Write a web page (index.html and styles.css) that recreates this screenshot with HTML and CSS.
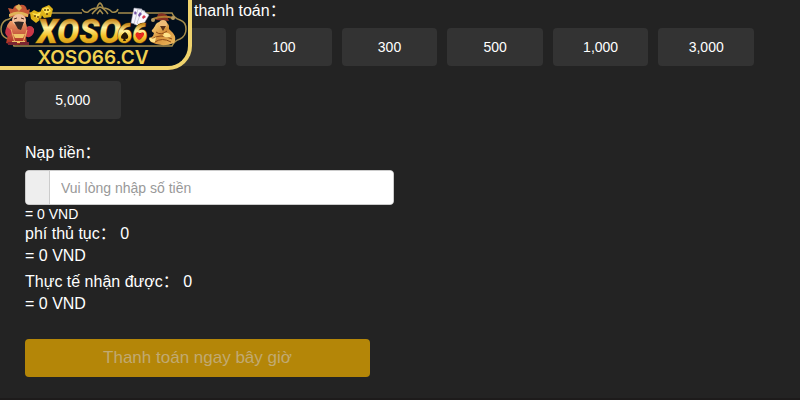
FILE: index.html
```html
<!DOCTYPE html>
<html lang="vi">
<head>
    <meta charset="UTF-8">
    <meta name="viewport" content="width=device-width, initial-scale=1.0">
    <title>Nạp tiền</title>
    <link rel="stylesheet" href="styles.css">
</head>
<body>
    <a class="logo" href="#" aria-label="XOSO66.CV">
        <svg class="logo-art" viewBox="0 0 188 66" aria-hidden="true">
            <defs>
                <linearGradient id="gold" x1="0" y1="0" x2="0" y2="1">
                    <stop offset="0.2" stop-color="#c98a1c"/>
                    <stop offset="0.4" stop-color="#fff3a0"/>
                    <stop offset="0.6" stop-color="#f5c32c"/>
                    <stop offset="0.9" stop-color="#c98a0c"/>
                </linearGradient>
                <linearGradient id="robe" x1="0" y1="0" x2="0" y2="1">
                    <stop offset="0" stop-color="#f3a06a"/>
                    <stop offset="1" stop-color="#a5251c"/>
                </linearGradient>
                <linearGradient id="statue" x1="0" y1="0" x2="1" y2="1">
                    <stop offset="0" stop-color="#ffe18c"/>
                    <stop offset="0.5" stop-color="#d6913a"/>
                    <stop offset="1" stop-color="#f0bd62"/>
                </linearGradient>
            </defs>

            <!-- frame -->
            <g fill="none" stroke="#a58c4c" stroke-width="1.5">
                <path d="M82 13H14Q12 19 6 20Q1 23 1 29Q1 36 6 38Q12 40 14 46H172Q174 41 180 39Q186 36 186 29Q186 22 180 20Q174 18 172 13H118"/>
                <path d="M82 9Q84 13 88 12Q92 8 97 8Q98 4 100 3Q102 4 103 8Q108 8 112 12Q117 13 118 9"/>
                <path d="M92 14Q97 8 100 7Q104 8 108 14M97 14L100 10L103 14"/>
            </g>

            <!-- god of wealth -->
            <path fill="url(#robe)" d="M10 21Q4 28 8 35L6 43Q16 47 27 43L26 37Q35 34 34 29Q31 25 27 27L25 20Z"/>
            <path fill="#c93747" d="M7 27Q3 33 8 37L13 32M27 27Q34 24 34 32Q32 38 27 37Z"/>
            <path fill="#c45535" d="M10 13L8 8L13 9Q15 4 20 5Q26 4 27 10L30 9L28 17H10Z"/>
            <path fill="#e0b358" d="M9 14Q18 9 28 14V17Q18 13 9 17ZM15 7L19 4L22 8L19 11Z"/>
            <ellipse cx="19" cy="20" rx="7" ry="6" fill="#f2bd98"/>
            <path d="M14 19L17 18M21 18L24 19" stroke="#49241b"/>
            <path fill="#342522" d="M14 22Q18 21 24 22L21 30L18 29Z"/>
            <path fill="#eec168" d="M13 34H25L23 38H15ZM12 41H25V43H12Z"/>
            <path d="M11 29L15 43M27 30L23 43" stroke="#f0b36b" fill="none"/>
            <path fill="#7b2531" d="M8 42H17V45H8ZM20 42H29V45H20Z"/>

            <!-- dice -->
            <path fill="#dfb319" d="M30 13L34 10L38 12L43 11L41 19L36 23L31 19ZM42 8L49 5L53 9L51 17L44 18L40 13Z"/>
            <path fill="#ffe557" d="M32 13L37 14L41 12L38 19ZM42 9L48 7L51 11L46 14Z"/>
            <g fill="#684407">
                <circle cx="35" cy="16" r="1"/>
                <circle cx="38" cy="17" r="1"/>
                <circle cx="45" cy="10" r="1"/>
                <circle cx="48" cy="10" r="1"/>
                <circle cx="47" cy="14" r="1"/>
            </g>

            <!-- cards -->
            <g stroke="#9b9ba9" stroke-width="0.5" fill="#f8f7ff">
                <path d="M134 8L142 9L140 25L131 23Z"/>
                <path d="M138 9L145 11L141 27L134 24Z"/>
                <path d="M142 10L149 15L142 27L137 23Z"/>
            </g>
            <path fill="#7555a5" d="M135 11L137 13L135 15L134 13ZM140 12L142 14L139 17L138 15Z"/>
            <path fill="#d8354c" d="M144 15L146 17L143 19L142 17Z"/>

            <!-- golden statue -->
            <path fill="url(#statue)" d="M155 26Q157 21 163 22Q170 22 169 29L173 33Q177 38 174 43Q162 48 151 42Q148 39 153 36L154 33Q150 31 153 29Z"/>
            <path fill="#842f22" d="M156 20L158 14Q163 12 167 15L169 21Z"/>
            <path d="M153 19Q163 15 173 18" stroke="#ae7b32" stroke-width="2" fill="none"/>
            <circle cx="153" cy="20" r="2" fill="#b79c63"/>
            <circle cx="173" cy="18" r="2" fill="#b79c63"/>
            <circle cx="163" cy="24" r="4" fill="#efbb77"/>
            <path fill="#593019" d="M160 26H166L163 31Z"/>
            <g fill="none" stroke="#8d4b18" stroke-width="1">
                <path d="M156 32Q161 36 167 31M152 39Q160 33 172 39M155 42Q162 37 171 42"/>
            </g>
            <path fill="#ffe38a" d="M150 37Q152 40 156 37L155 42Q151 43 149 39ZM164 33Q169 32 171 36Q168 39 163 36Z"/>

            <g class="logo-name" fill="url(#gold)">
                <text x="37" y="43">XOSO</text>
                <text class="logo-number" x="117" y="43">66</text>
            </g>
            <path fill="#241706" d="M125 32Q129 35 128 38Q126 40 125 38L126 41H123L124 38Q121 40 121 37Q121 35 125 32Z"/>
            <path fill="#e92a1e" d="M139 40Q134 36 136 33Q138 31 140 34Q142 31 144 33Q145 36 139 40Z"/>
            <text class="logo-domain" x="93" y="64" text-anchor="middle">XOSO66.CV</text>
        </svg>
    </a>

    <main class="content">
        <h2 class="title quick-title">thanh toán：</h2>
        <div class="amounts">
            <button class="amount amount-first" type="button" aria-label="Số tiền"></button>
            <button class="amount" type="button">100</button>
            <button class="amount" type="button">300</button>
            <button class="amount" type="button">500</button>
            <button class="amount" type="button">1,000</button>
            <button class="amount" type="button">3,000</button>
            <button class="amount" type="button">5,000</button>
        </div>

        <form class="deposit">
            <label class="title" for="money">Nạp tiền：</label>
            <div class="input-group">
                <span class="addon"></span>
                <input class="money" id="money" type="text" placeholder="Vui lòng nhập số tiền">
            </div>
            <p class="rate">= 0 VND</p>
            <div class="result">
                <p>phí thủ tục： 0</p>
                <p>= 0 VND</p>
            </div>
            <div class="result">
                <p>Thực tế nhận được： 0</p>
                <p>= 0 VND</p>
            </div>
            <button class="submit" type="submit" disabled>Thanh toán ngay bây giờ</button>
        </form>
    </main>
</body>
</html>
```

FILE: styles.css
```css
* {
    box-sizing: border-box;
}

body {
    margin: 0;
    min-height: 100vh;
    background: #232323;
    border-bottom: 2px solid #1d1b1b;
    color: #fff;
    font-family: "Liberation Sans", Arial, "Noto Sans CJK SC", sans-serif;
    font-size: 16px;
    line-height: 22px;
}

p {
    margin: 0;
}

button,
input {
    font-family: inherit;
}

/* Logo */
.logo {
    position: absolute;
    top: 0;
    left: 0;
    width: 192px;
    height: 70px;
    background: #020e1c;
    border: solid #efd36d;
    border-width: 0 4px 4px 0;
    border-bottom-right-radius: 24px;
    overflow: hidden;
}

.logo-art {
    display: block;
    width: 100%;
}

.logo-name {
    font-family: Roboto, sans-serif;
    font-size: 33px;
    font-weight: 900;
    font-style: italic;
    stroke: #5b3504;
    stroke-width: 1px;
    paint-order: stroke;
}

.logo-number {
    font-size: 27px;
}

.logo-domain {
    fill: #f0d050;
    font-family: Inter, sans-serif;
    font-size: 19px;
    font-weight: 600;
}

/* Content */
.content {
    padding: 0 46px 20px 25px;
}

.title {
    display: block;
    margin: 0;
    font-size: 16px;
    font-weight: 400;
    line-height: 22px;
}

.quick-title {
    padding-left: 169px;
}

.amounts {
    display: grid;
    grid-template-columns: repeat(7, 1fr);
    gap: 15px 10px;
    margin-top: 6px;
}

.amount {
    height: 38px;
    padding: 0;
    background: #333;
    border: 0;
    border-radius: 4px;
    color: #fff;
    font-size: 14px;
}

.amount-first {
    grid-column-start: 2;
}

.deposit {
    margin-top: 23px;
}

.input-group {
    display: flex;
    max-width: 369px;
    height: 35px;
    margin-top: 6px;
    background: #fff;
    border: 1px solid #ccc;
    border-radius: 4px;
    overflow: hidden;
}

.addon {
    flex: 0 0 24px;
    background: #eee;
    border-right: 1px solid #ccc;
}

.money {
    flex: 1;
    min-width: 0;
    padding: 0 11px;
    background: #fff;
    border: 0;
    color: #555;
    font-size: 14px;
}

.money::placeholder {
    color: #999;
}

.rate {
    font-size: 14px;
    line-height: 18px;
}

.result {
    margin-bottom: 4px;
}

.submit {
    display: block;
    width: 100%;
    max-width: 345px;
    height: 38px;
    margin-top: 24px;
    background: #b48608;
    border: 0;
    border-radius: 4px;
    color: #c1aa72;
    font-size: 17px;
}
```
